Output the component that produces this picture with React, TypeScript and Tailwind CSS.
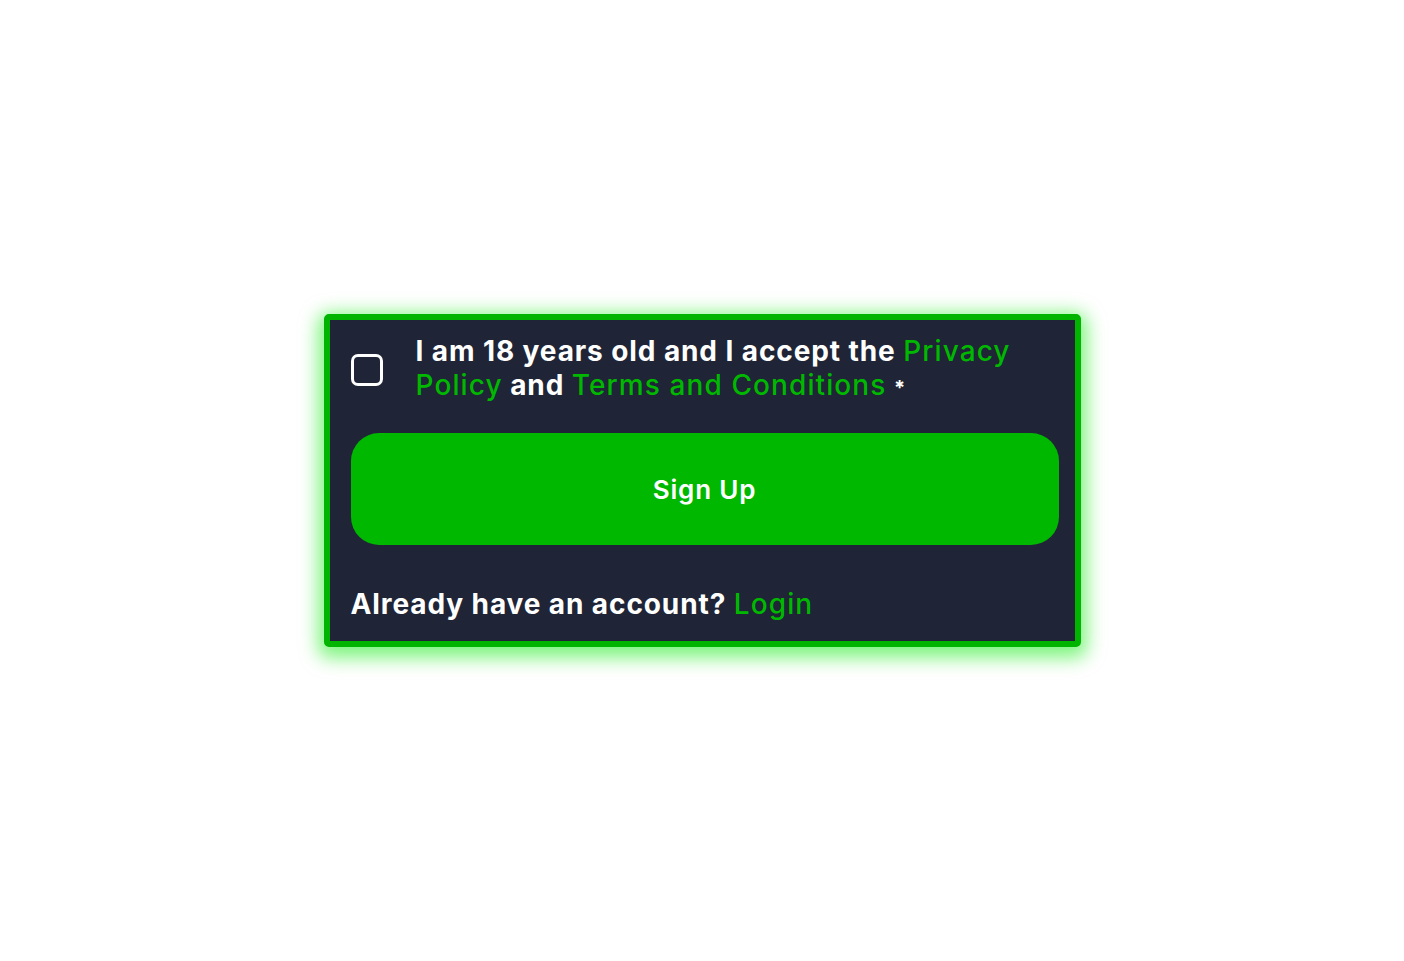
export default function App() {
  return (
    <div className="flex min-h-screen items-center justify-center bg-white" style={{ fontFamily: 'Inter, "Noto Sans", sans-serif' }}>
      <div className="w-[757px] rounded-[5px] border-[6px] border-[#00b400] bg-[#1f2536] pt-[14px] pr-[16px] pb-[20px] pl-[21px] shadow-[0_5px_18px_6px_rgba(0,235,0,0.5)]">
        <div className="flex items-center gap-[33px]">
          <div className="h-[32px] w-[32px] shrink-0 rounded-[7px] border-[3px] border-white" />
          <p className="text-[28px] leading-[34px] font-bold tracking-[0.9px] text-white">
            I am 18 years old and I accept the{' '}
            <span className="font-medium tracking-[1.1px] text-[#00b800]">Privacy Policy</span> and{' '}
            <span className="font-medium tracking-[1.1px] text-[#00b800]">Terms and Conditions</span>{' '}
            <span className="text-[20px]">*</span>
          </p>
        </div>
        <button className="mt-[28px] flex h-[112px] w-full items-center justify-center rounded-[28px] bg-[#00b800] text-[26px] font-semibold tracking-[0.8px] text-white">
          Sign Up
        </button>
        <p className="mt-[42px] text-[28px] leading-[34px] font-bold tracking-[0.9px] text-white">
          Already have an account? <span className="font-medium tracking-[1.1px] text-[#00b800]">Login</span>
        </p>
      </div>
    </div>
  )
}
